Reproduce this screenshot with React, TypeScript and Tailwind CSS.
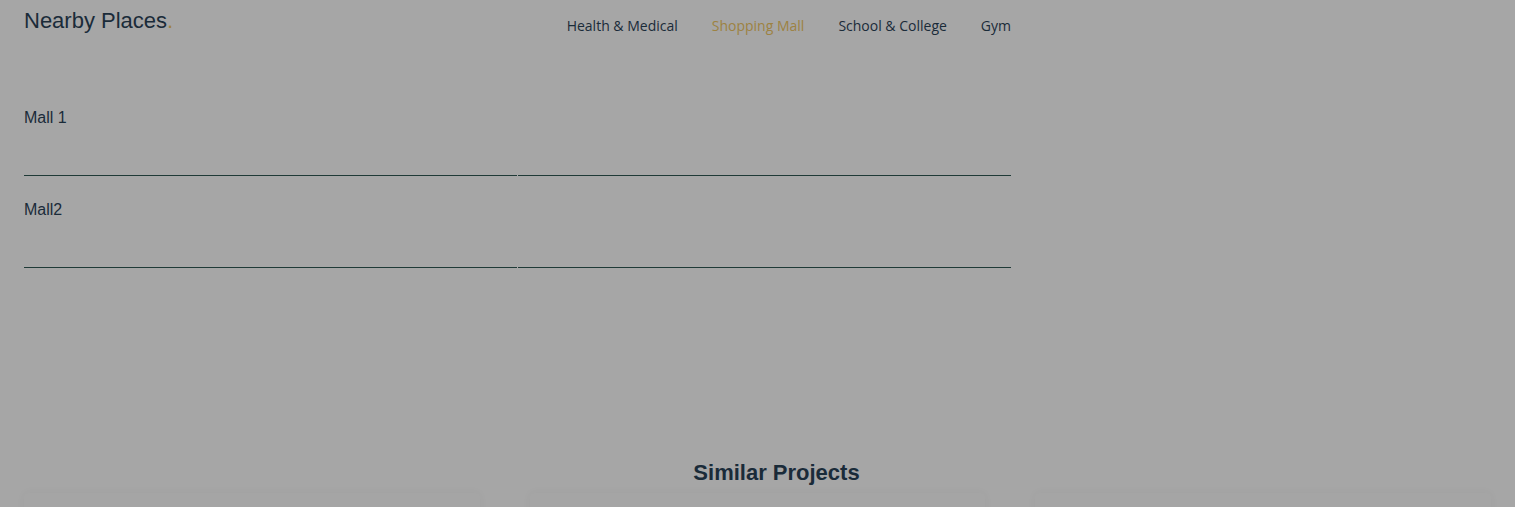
import React from 'react'

const places = ['Mall 1', 'Mall2']

const tabs = [
  { label: 'Health & Medical', active: false },
  { label: 'Shopping Mall', active: true },
  { label: 'School & College', active: false },
  { label: 'Gym', active: false },
]

export default function App() {
  return (
    <div className="min-h-screen overflow-hidden bg-[#a6a6a6] font-['Liberation_Sans',Arial,sans-serif] text-[#1a2b39]">
      <section className="ml-[24px] w-[987px]">
        <div className="flex h-[84px] items-start justify-between pt-[7px]">
          <h2 className="text-[22px] leading-[28px]">
            Nearby Places<span className="text-[#9d8242]">.</span>
          </h2>
          <nav className="flex gap-[34px] pt-[9px] font-['Open_Sans',sans-serif] text-[14px] leading-[20px]">
            {tabs.map((t) => (
              <span key={t.label} className={t.active ? 'text-[#9d8242]' : 'text-[#1a2b39]'}>
                {t.label}
              </span>
            ))}
          </nav>
        </div>

        {places.map((p) => (
          <div key={p} className="grid h-[92px] grid-cols-2 gap-x-px">
            <div className="border-b border-[#1f3a37] pt-[25px] text-[16px] leading-[18px]">{p}</div>
            <div className="border-b border-[#1f3a37]"></div>
          </div>
        ))}
      </section>

      <h2 className="mt-[191px] pl-[38px] text-center text-[22px] font-bold leading-[28px]">Similar Projects</h2>

      <div className="mt-[6px] grid grid-cols-3 gap-[50px] px-[24px]">
        {[0, 1, 2].map((i) => (
          <div key={i} className="h-[60px] rounded-sm bg-[#a5a5a5] shadow-[0_0_10px_rgba(0,0,0,0.04)]"></div>
        ))}
      </div>
    </div>
  )
}
